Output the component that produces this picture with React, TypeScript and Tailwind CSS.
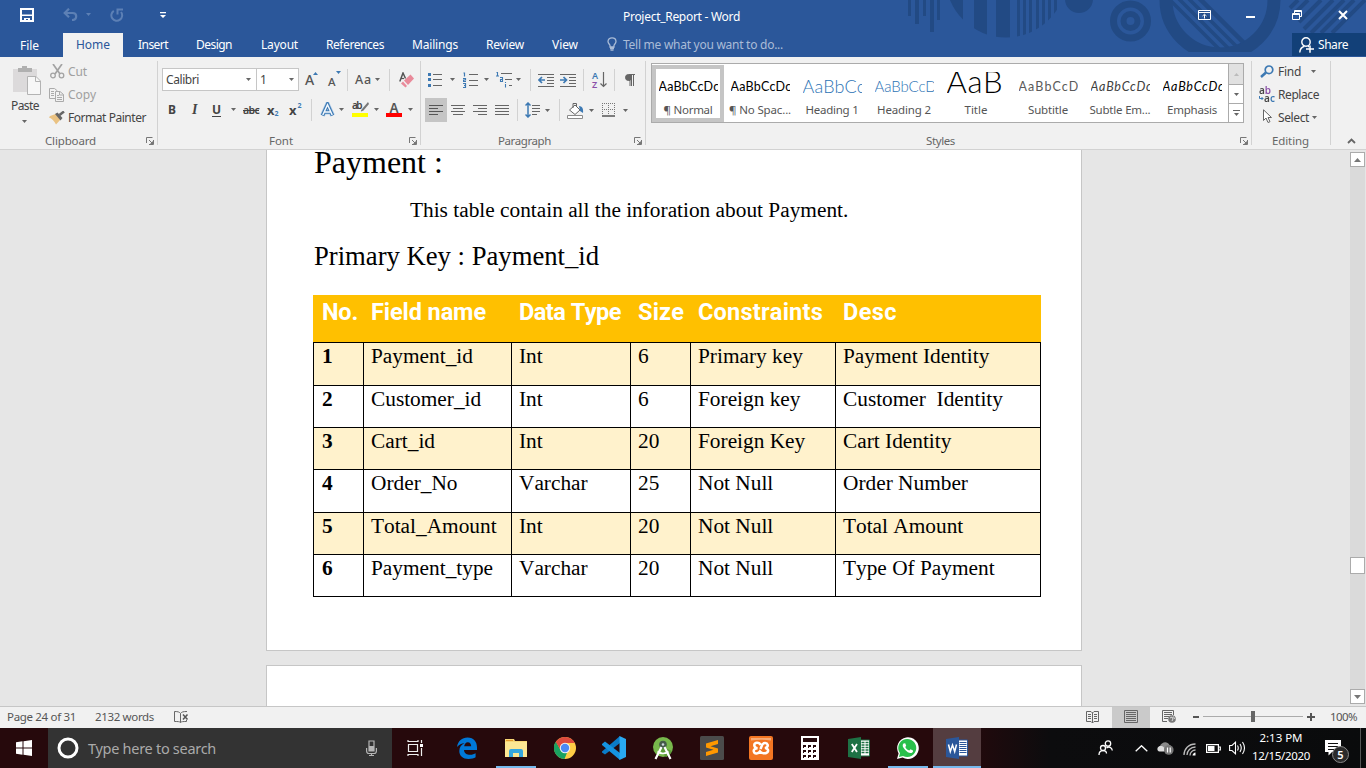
import { useLayoutEffect, useRef, useState } from "react";
import type { ReactNode } from "react";

/* A run of text whose tracking is tuned so that it fills a given width. */
function T({ w, c = "", children }: { w: number; c?: string; children: string }) {
  const ref = useRef<HTMLSpanElement>(null);
  const [ls, setLs] = useState(0);
  useLayoutEffect(() => {
    const el = ref.current;
    if (!el) return;
    el.style.letterSpacing = "0px";
    const natural = el.getBoundingClientRect().width;
    const next = (w - natural) / children.length;
    el.style.letterSpacing = next + "px";
    setLs(next);
  }, [w, children]);
  return (
    <span className={"flex shrink-0 whitespace-pre " + c} style={{ width: w }}>
      <span ref={ref} className="inline-block shrink-0" style={{ letterSpacing: ls }}>
        {children}
      </span>
    </span>
  );
}

function Ic({ w, h, c = "", children }: { w: number; h: number; c?: string; children: ReactNode }) {
  return (
    <svg width={w} height={h} viewBox={`0 0 ${w} ${h}`} className={"block shrink-0 " + c} fill="none">
      {children}
    </svg>
  );
}

const Chev = ({ c = "" }: { c?: string }) => (
  <Ic w={5} h={3} c={c}>
    <path d="M0 0H5L2.5 3Z" fill="#666" />
  </Ic>
);

const Sep = ({ c = "" }: { c?: string }) => <div className={"h-[22px] w-px shrink-0 bg-[#d2d2d2] " + c} />;

const Launcher = ({ c = "" }: { c?: string }) => (
  <Ic w={8} h={8} c={c}>
    <path d="M0.5 6V0.5H6.5M3 3L6 6M7.5 3V7.5H3" stroke="#777" />
    <path d="M7 4V7H4Z" fill="#777" />
  </Ic>
);

/* ---------- header ---------- */

function Pattern() {
  return (
    <svg width="466" height="57" viewBox="900 0 466 57" className="absolute top-0 right-0" fill="none">
      <defs>
        <clipPath id="disc"><circle cx="1006" cy="-23" r="60.5" /></clipPath>
        <clipPath id="inner"><circle cx="1220" cy="0" r="48" /></clipPath>
        <clipPath id="flat"><rect x="1150" y="0" width="140" height="52" /></clipPath>
      </defs>
      <g fill="#224a84">
        <path d="M908 0h3v16h-3zM915 0h4v24h-4zM923 0h3v16h-3zM930 0h4v32h-4zM937 0h3v20h-3z" />
        <g clipPath="url(#disc)">
          <path d="M950 0h13v40h-13zM974 0h13v40h-13zM996 0h14v40h-14zM1017 0h3v40h-3zM1023 0h3v40h-3zM1029 0h3v40h-3zM1036 0h3v40h-3zM1042 0h3v40h-3zM1048 0h3v40h-3zM1054 0h3v40h-3z" />
        </g>
        <circle cx="1079" cy="-1" r="14" />
      </g>
      <circle cx="1130.500" cy="21" r="17" stroke="#224a84" strokeWidth="7" />
      <circle cx="1130.500" cy="21" r="7" stroke="#224a84" strokeWidth="6" />
      <g clipPath="url(#flat)">
        <circle cx="1220" cy="0" r="54" stroke="#224a84" strokeWidth="13" />
      </g>
      <g clipPath="url(#inner)" stroke="#224a84">
        <path d="M1166 -4L1226 56M1176 -4L1236 56" strokeWidth="3.500" />
        <path d="M1186 -4L1246 56" strokeWidth="3.500" />
        <path d="M1197 -4L1257 56" strokeWidth="4.500" />
      </g>
      <g stroke="#224a84" strokeWidth="4">
        <path d="M1290 8L1298 0M1293 15L1308 0M1299 22L1321 0M1304 29L1333 0M1311 33L1344 0M1321 33L1354 0M1332 33L1365 0" />
      </g>
    </svg>
  );
}

function TitleBar() {
  return (
    <div className="relative flex h-[33px] items-center">
      <Ic w={14} h={14} c="ml-[20px] -mt-[3px]">
        <path d="M1 1H13V13H1Z" stroke="#fff" strokeWidth="2" />
        <path d="M2 6.500H12V8H2Z" fill="#fff" />
        <path d="M4 10H10V13H8V11H6V13H4Z" fill="#fff" />
      </Ic>
      <Ic w={15} h={13} c="ml-[29px] -mt-[4px]">
        <path d="M6 0.700L1.700 5L6 9.300M2 5H9.500C12 5 13.200 6.500 13.200 8.300C13.200 10.500 11.500 12 9 12" stroke="#5d80b5" strokeWidth="2.200" />
      </Ic>
      <Ic w={5} h={3} c="ml-[8px] -mt-[4px]"><path d="M0 0H5L2.500 3Z" fill="#5d80b5" /></Ic>
      <Ic w={14} h={14} c="ml-[19px] -mt-[4px]">
        <path d="M3.800 2.800A5.400 5.400 0 1 0 11 4M7.500 6.500V1.500H13" stroke="#5d80b5" strokeWidth="2" />
      </Ic>
      <Ic w={6} h={7} c="ml-[36px] -mt-[3px]">
        <path d="M0 0H6V1.200H0ZM0 3H6L3 6Z" fill="#fff" />
      </Ic>
      <T w={117} c="ml-[457px] text-[12px] text-white">Project_Report - Word</T>
      <Ic w={13} h={10} c="ml-[458px] -mt-[3px]">
        <path d="M0.500 0.500H12.500V9.500H0.500ZM0.500 2.500H12.500M6.500 8.500V4.500M4.500 6L6.500 4.200L8.500 6" stroke="#fff" />
      </Ic>
      <Ic w={9} h={2} c="ml-[35px]"><path d="M0 0H9V2H0Z" fill="#fff" /></Ic>
      <Ic w={10} h={10} c="ml-[37px] -mt-[3px]">
        <path d="M0.500 3.500H7.500V9.500H0.500ZM0 4.500H8M2.500 3V0.500H9.500V6.500H8M2.500 1.500H9.500" stroke="#fff" />
      </Ic>
      <Ic w={10} h={10} c="ml-[36px] -mt-[3px]"><path d="M1 1L9 9M9 1L1 9" stroke="#fff" strokeWidth="2" /></Ic>
    </div>
  );
}

function Tabs() {
  return (
    <div className="relative flex h-[24px] items-center text-[12px] text-white">
      <T w={19} c="ml-[20px] mt-[2px]">File</T>
      <div className="ml-[24px] flex h-full w-[60px] items-center bg-[#f1f1f1] pl-[13px] text-[#2b579a]"><T w={34}>Home</T></div>
      <T w={30} c="ml-[15px]">Insert</T>
      <T w={36} c="ml-[28px]">Design</T>
      <T w={37} c="ml-[29px]">Layout</T>
      <T w={58} c="ml-[28px]">References</T>
      <T w={46} c="ml-[28px]">Mailings</T>
      <T w={38} c="ml-[28px]">Review</T>
      <T w={26} c="ml-[28px]">View</T>
      <Ic w={10} h={14} c="ml-[29px] -mt-[2px]">
        <path d="M3 10V8.500C3 7.500 1 6.700 1 4.500C1 2.300 2.800 0.800 5 0.800S9 2.300 9 4.500C9 6.700 7 7.500 7 8.500V10ZM3 11.500H7M3.500 13.200H6.500" stroke="#aabcd7" strokeWidth="1.300" />
      </Ic>
      <T w={160} c="ml-[6px] text-[#aabcd7]">Tell me what you want to do...</T>
      <div className="ml-auto flex h-[23px] w-[74px] items-center self-start bg-[#124078] pl-[7px]">
        <Ic w={15} h={16}>
          <circle cx="7" cy="5" r="4.200" stroke="#fff" strokeWidth="1.400" />
          <path d="M0.800 15.500C1 12 3 9.800 5.500 9.200M9 9C10 10 10 10 10 10" stroke="#fff" strokeWidth="1.400" />
          <path d="M7 12H15M11 8.500V15.800" stroke="#fff" strokeWidth="1.500" />
        </Ic>
        <T w={30} c="ml-[4px]">Share</T>
      </div>
    </div>
  );
}

/* ---------- ribbon ---------- */

function Clipboard() {
  return (
    <div className="flex h-full w-[157px] flex-col text-[12px] text-[#444]">
      <div className="flex h-[76px]">
        <div className="flex w-[48px] flex-col pt-[8px]">
          <Ic w={29} h={31} c="ml-[13px]">
            <path d="M0 4H24V27H0Z" fill="#dcdadb" />
            <path d="M5 3H9V1H14V3H19V7H5Z" fill="#b0b0b0" />
            <path d="M14.500 11.500H23L27.500 16V29.500H14.500Z" fill="#f7f7f7" stroke="#b3b3b3" />
            <path d="M22.500 11.500V16.500H27.500" stroke="#b3b3b3" />
          </Ic>
          <T w={28} c="ml-[11px] mt-[2px]">Paste</T>
          <Chev c="ml-[22px] mt-[6px]" />
        </div>
        <div className="flex flex-col pt-[3px]">
          <div className="flex h-[23px] items-center text-[#a0a0a0]">
            <Ic w={15} h={15} c="ml-[2px]">
              <path d="M3 0L10 10M12 0L5 10" stroke="#a3a3a3" strokeWidth="1.700" />
              <circle cx="3" cy="11.500" r="2.300" stroke="#a3a3a3" strokeWidth="1.300" />
              <circle cx="11.500" cy="11.500" r="2.300" stroke="#a3a3a3" strokeWidth="1.300" />
            </Ic>
            <T w={19} c="ml-[3px]">Cut</T>
          </div>
          <div className="flex h-[23px] items-center text-[#a0a0a0]">
            <Ic w={15} h={14} c="ml-[1px]">
              <path d="M6 10.500H0.500V0.500H5.500L8.500 3" stroke="#aaa" />
              <path d="M6.500 3.500H11L14.500 6.500V13.500H6.500ZM10.500 3.500V7H14.500M8 7.500H10M8 9.500H13M8 11.500H13M2 3.500H5M2 5.500H5M2 7.500H5" stroke="#aaa" />
            </Ic>
            <T w={28} c="ml-[4px]">Copy</T>
          </div>
          <div className="flex h-[23px] items-center">
            <Ic w={16} h={14} c="ml-[1px]">
              <path d="M1 5L8 2.500L12 8L7 13.500C5 10 3 7.500 0 6.500Z" fill="#eac282" />
              <path d="M6 3L8.500 1.500L13.500 7L11.500 9.500Z" fill="#666" />
              <path d="M10.500 4L15 0.500" stroke="#666" strokeWidth="2.500" />
            </Ic>
            <T w={78} c="ml-[3px]">Format Painter</T>
          </div>
        </div>
      </div>
      <div className="flex h-[15px] items-center text-[11.500px] text-[#666]">
        <T w={51} c="ml-[45px]">Clipboard</T>
        <Launcher c="ml-[50px]" />
      </div>
    </div>
  );
}

function FontGroup() {
  return (
    <div className="flex h-full w-[262px] flex-col text-[#444]">
      <div className="mt-[11px] flex h-[23px] items-center">
        <div className="ml-[4px] flex h-full w-[95px] items-center border border-[#c6c6c6] bg-white pl-[3px] text-[12px]">
          <T w={33}>Calibri</T>
          <Chev c="ml-[47px]" />
        </div>
        <div className="-ml-px flex h-full w-[43px] items-center border border-[#c6c6c6] bg-white pl-[3px] text-[12px]">
          <T w={6}>1</T>
          <Chev c="ml-[23px]" />
        </div>
        <div className="ml-[6px] flex w-[15px] shrink-0">
          <span className="text-[14px] leading-[16px] font-medium text-[#555]">A</span>
          <Ic w={5} h={3} c="-ml-[1px]"><path d="M0 3H5L2.500 0Z" fill="#3d79b3" /></Ic>
        </div>
        <div className="ml-[8px] flex w-[15px] shrink-0">
          <span className="mt-[3px] text-[11.500px] leading-[15px] font-medium text-[#555]">A</span>
          <Ic w={5} h={3} c=""><path d="M0 0H5L2.500 3Z" fill="#3d79b3" /></Ic>
        </div>
        <Sep c="ml-[4px]" />
        <T w={17} c="ml-[7px] text-[12.500px] font-medium text-[#555]">Aa</T>
        <Chev c="ml-[3px]" />
        <Sep c="ml-[9px]" />
        <Ic w={15} h={16} c="ml-[9px]">
          <path d="M0.800 9.500L4 1L6.500 6.500" stroke="#555" strokeWidth="1.500" />
          <path d="M2 6.500H5" stroke="#555" strokeWidth="1.200" />
          <path d="M5 8.500L11.500 2.500L15 6.500L9 13Z" fill="#e98a9a" />
          <path d="M4 9.500L8 14L6.500 15.500L2 11.500Z" fill="#e98a9a" />
        </Ic>
      </div>
      <div className="mt-[7px] flex h-[23px] items-center text-[#444]">
        <span className="ml-[10px] w-[8px] text-[12px] font-bold">B</span>
        <span className="ml-[16px] w-[8px] font-['Liberation_Serif'] text-[14px] font-bold italic">I</span>
        <span className="ml-[12px] w-[9px] text-[12px] leading-[13px] font-bold"><span className="block border-b border-[#444]">U</span></span>
        <Chev c="ml-[10px]" />
        <T w={16} c="ml-[7px] text-[10.500px] font-semibold line-through">abc</T>
        <div className="ml-[8px] flex w-[13px] shrink-0 items-end font-bold"><span className="text-[13px] leading-[16px]">x</span><span className="text-[7px] leading-[8px] text-[#3d79b3]">2</span></div>
        <div className="ml-[9px] flex w-[14px] shrink-0 font-bold"><span className="text-[13px] leading-[16px]">x</span><span className="ml-px text-[7px] leading-[7px] text-[#3d79b3]">2</span></div>
        <Sep c="ml-[8px]" />
        <Ic w={15} h={16} c="ml-[8px]">
          <path d="M2.500 13.500L7.500 2.500L12.500 13.500M4.500 10H10.500" stroke="#b4cfe9" strokeWidth="5" />
          <path d="M2.500 13.500L7.500 2.500L12.500 13.500M4.500 10H10.500" stroke="#3d79b3" strokeWidth="3.600" />
          <path d="M2.800 13L7.500 2.800L12.200 13M4.500 10H10.500" stroke="#f5f9fd" strokeWidth="1.500" />
        </Ic>
        <Chev c="ml-[4px]" />
        <div className="ml-[8px] flex h-[17px] w-[17px] shrink-0 flex-col">
          <div className="flex h-[12px]">
            <T w={9} c="text-[10px] leading-[8px] font-semibold">ab</T>
            <Ic w={8} h={12}><path d="M7 1L1 8L-1 11L2.500 9.500L8 3Z" fill="#777" /></Ic>
          </div>
          <div className="h-[4px] w-[16px] bg-[#ffff00]" />
        </div>
        <Chev c="ml-[5px]" />
        <div className="ml-[7px] flex h-[17px] w-[16px] shrink-0 flex-col items-center">
          <span className="h-[12px] text-[13.500px] leading-[14px] font-semibold text-[#555]">A</span>
          <div className="h-[4px] w-full shrink-0 bg-[#ff0000]" />
        </div>
        <Chev c="ml-[6px]" />
      </div>
      <div className="mt-[12px] flex h-[15px] items-center text-[11.500px] text-[#666]">
        <T w={24} c="ml-[111px]">Font</T>
        <Launcher c="ml-[116px]" />
      </div>
    </div>
  );
}

const L = "#666";
function Paragraph() {
  return (
    <div className="flex h-full w-[224px] flex-col text-[#444]">
      <div className="mt-[11px] flex h-[23px] items-center">
        <Ic w={14} h={15} c="ml-[7px]">
          <path d="M5 2.500H14M5 7.500H14M5 13.500H14" stroke={L} />
          <path d="M0 1H3V4H0ZM0 6H3V9H0ZM0 12H3V15H0Z" fill="#3d79b3" />
        </Ic>
        <Chev c="ml-[8px]" />
        <Ic w={15} h={16} c="ml-[8px]">
          <path d="M6 2.500H15M6 8.500H15M6 13.500H15" stroke={L} />
          <path d="M0.500 1H1.500V4.500M0 6.500H2.500V8H0.500V9.500H3M0 11.500H2.500V15.500H0M1 13.500H2" stroke="#3d79b3" strokeWidth="1.200" />
        </Ic>
        <Chev c="ml-[6px]" />
        <Ic w={16} h={16} c="ml-[7px]">
          <path d="M5 1.500H16M9 7.500H16M13 13.500H16" stroke={L} />
          <path d="M0.500 0.500H1.500V4M0 4H3M4 5.500H6.500V9.500H4.500V7.500H6.500M9.500 12V15.500M9.500 10V11" stroke="#3d79b3" strokeWidth="1.100" />
        </Ic>
        <Chev c="ml-[4px]" />
        <Sep c="ml-[9px]" />
        <Ic w={16} h={14} c="ml-[7px]">
          <path d="M0 1.500H16M9 4.500H16M9 7.500H16M9 10.500H16M0 13.500H16" stroke={L} />
          <path d="M7 7H1M4 4L1 7L4 10" stroke="#3d79b3" strokeWidth="1.700" />
        </Ic>
        <Ic w={16} h={14} c="ml-[6px]">
          <path d="M0 1.500H16M9 4.500H16M9 7.500H16M9 10.500H16M0 13.500H16" stroke={L} />
          <path d="M0 7H6M3.500 4L6.500 7L3.500 10" stroke="#3d79b3" strokeWidth="1.700" />
        </Ic>
        <Sep c="ml-[7px]" />
        <div className="ml-[8px] flex h-[18px] w-[15px] shrink-0">
          <span className="flex w-[7px] flex-col text-[9px] leading-[9px] font-semibold"><span className="text-[#3d79b3]">A</span><span className="text-[#8a4fa8]">Z</span></span>
          <Ic w={7} h={16} c="ml-[1px] mt-px"><path d="M3.500 0V14M0.500 11.500L3.500 14.500L6.500 11.500" stroke={L} strokeWidth="1.200" /></Ic>
        </div>
        <Sep c="ml-[7px]" />
        <Ic w={10} h={12} c="ml-[10px]">
          <path d="M10 0.500H3.500A3 3 0 0 0 3.500 6.500H5V12M8.500 0.500V12M6.500 0.500V12" stroke={L} strokeWidth="1" />
          <path d="M6 0.500H3.500A3 3 0 0 0 3.500 6.500H6Z" fill={L} />
        </Ic>
      </div>
      <div className="mt-[7px] flex h-[24px] items-center">
        <div className="ml-[4px] flex h-full w-[22px] items-center bg-[#c5c5c5] pl-[4px]">
          <Ic w={14} h={11}><path d="M0 0.500H14M0 3.500H9M0 6.500H14M0 9.500H9" stroke="#555" /></Ic>
        </div>
        <Ic w={14} h={11} c="ml-[4px]"><path d="M0 0.500H14M2 3.500H12M0 6.500H14M2 9.500H12" stroke={L} /></Ic>
        <Ic w={14} h={11} c="ml-[8px]"><path d="M0 0.500H14M5 3.500H14M0 6.500H14M5 9.500H14" stroke={L} /></Ic>
        <Ic w={14} h={11} c="ml-[8px]"><path d="M0 0.500H14M0 3.500H14M0 6.500H14M0 9.500H14" stroke={L} /></Ic>
        <Sep c="ml-[8px]" />
        <Ic w={15} h={16} c="ml-[7px]">
          <path d="M7 3.500H15M7 6.500H15M7 9.500H15M7 12.500H12" stroke={L} />
          <path d="M3 1V15M0.500 3.500L3 1L5.500 3.500M0.500 12.500L3 15L5.500 12.500" stroke="#3d79b3" strokeWidth="1.500" />
        </Ic>
        <Chev c="ml-[5px]" />
        <Sep c="ml-[9px]" />
        <Ic w={17} h={17} c="ml-[7px]">
          <path d="M2.500 8L8 3L13 8L8 12.500Z" fill="#fff" stroke={L} />
          <path d="M6 6V1.500H9.500V5" stroke={L} />
          <path d="M12 4C15 4.500 16.500 6 16 11L13 9Z" fill="#3d79b3" />
          <path d="M0.500 13.500H15.500V16.500H0.500Z" fill="#fff" stroke="#8a8a8a" />
        </Ic>
        <Chev c="ml-[5px]" />
        <Ic w={14} h={14} c="ml-[8px]">
          <path d="M0 0.500H13M0 6.500H13M0.500 0V12M6.500 0V12M12.500 0V12" stroke="#777" strokeDasharray="1 1" />
          <path d="M0 13H13" stroke="#555" strokeWidth="1.500" />
        </Ic>
        <Chev c="ml-[7px]" />
      </div>
      <div className="mt-[11px] flex h-[15px] items-center text-[11.500px] text-[#666]">
        <T w={53} c="ml-[77px]">Paragraph</T>
        <Launcher c="ml-[83px]" />
      </div>
    </div>
  );
}

type StyleItem = { s: string; w: number; c: string; n: string; nw: number };
const styles: StyleItem[] = [
  { s: "AaBbCcDc", w: 61, c: "text-[12.500px] leading-[30px] text-black", n: "¶ Normal", nw: 49 },
  { s: "AaBbCcDc", w: 61, c: "text-[12.500px] leading-[30px] text-black", n: "¶ No Spac...", nw: 62 },
  { s: "AaBbCc", w: 63, c: "text-[18px] leading-[29px] text-[#2e74b5] font-light", n: "Heading 1", nw: 53 },
  { s: "AaBbCcD", w: 62, c: "text-[15px] leading-[28px] text-[#2e74b5] font-light", n: "Heading 2", nw: 54 },
  { s: "AaB", w: 57, c: "text-[31px] leading-[18px] text-black font-light", n: "Title", nw: 23 },
  { s: "AaBbCcD", w: 61, c: "text-[12.500px] leading-[30px] text-[#5a5a5a]", n: "Subtitle", nw: 40 },
  { s: "AaBbCcDc", w: 62, c: "text-[12.500px] leading-[30px] text-[#404040] italic", n: "Subtle Em...", nw: 61 },
  { s: "AaBbCcDc", w: 62, c: "text-[12.500px] leading-[30px] text-black italic", n: "Emphasis", nw: 50 },
];

function StylesGroup() {
  return (
    <div className="flex h-full w-[605px] flex-col">
      <div className="mt-[6px] ml-[5px] flex h-[60px] w-[593px] border border-[#ababab] bg-white">
        {styles.map((x, i) => (
          <div key={x.n + i} className={"flex h-[57px] w-[72px] shrink-0 flex-col items-center " + (i === 0 ? "mt-px border-4 border-[#c5c5c5]" : "mt-px border-4 border-transparent")}>
            <div className="mt-[3px] flex h-[26px] w-[59px] shrink-0 items-start overflow-hidden">
              <T w={x.w} c={"font-['Lato'] " + x.c}>{x.s}</T>
            </div>
            <div className="mt-[4px] text-[11.500px] leading-[16px] text-[#555]"><T w={x.nw}>{x.n}</T></div>
          </div>
        ))}
        <div className="ml-auto flex w-[15px] flex-col border-l border-[#ababab]">
          <div className="flex h-[20px] items-center justify-center bg-[#e1e1e1]"><Ic w={5} h={3}><path d="M0 3H5L2.500 0Z" fill="#bbb" /></Ic></div>
          <div className="flex h-[19px] items-center justify-center border-t border-[#ababab]"><Chev /></div>
          <div className="flex h-[19px] items-center justify-center border-t border-[#ababab]">
            <Ic w={7} h={6}><path d="M0 0.500H7" stroke="#666" /><path d="M1 3H6L3.500 6Z" fill="#666" /></Ic>
          </div>
        </div>
      </div>
      <div className="mt-[10px] flex h-[15px] items-center text-[11.500px] text-[#666]">
        <T w={29} c="ml-[280px]">Styles</T>
        <Launcher c="ml-[285px]" />
      </div>
    </div>
  );
}

function Editing() {
  return (
    <div className="flex h-full w-[78px] flex-col text-[12px] text-[#444]">
      <div className="flex h-[76px] flex-col pt-[3px]">
        <div className="flex h-[23px] items-center">
          <Ic w={14} h={13} c="ml-[8px]">
            <circle cx="9" cy="4.800" r="3.800" stroke="#3d79b3" strokeWidth="1.700" />
            <path d="M6 7.500L1 12" stroke="#3d79b3" strokeWidth="2.500" />
          </Ic>
          <T w={23} c="ml-[4px]">Find</T>
          <Chev c="ml-[10px]" />
        </div>
        <div className="flex h-[23px] items-center">
          <div className="ml-[7px] flex h-[17px] w-[16px] shrink-0 flex-col text-[10px] leading-[8px] font-semibold">
            <T w={12} c="bg-[linear-gradient(90deg,#444_50%,#8a4fa8_50%)] bg-clip-text text-transparent">ab</T>
            <span className="flex items-center">
              <Ic w={5} h={5}><path d="M0.500 0V2.500H4M2.500 1L4 2.500L2.500 4" stroke="#3d79b3" /></Ic>
              <T w={11} c="bg-[linear-gradient(90deg,#444_54%,#3d79b3_54%)] bg-clip-text text-transparent">ac</T>
            </span>
          </div>
          <T w={41} c="ml-[3px]">Replace</T>
        </div>
        <div className="flex h-[23px] items-center">
          <Ic w={9} h={15} c="ml-[11px] mr-[2px] -mt-[2px]"><path d="M0.500 0.800V11.500L3 9L5 13.500L7 12.700L5 8.500H8.500Z" fill="#fff" stroke="#666" /></Ic>
          <T w={31} c="ml-[4px]">Select</T>
          <Chev c="ml-[3px]" />
        </div>
      </div>
      <div className="flex h-[15px] items-center text-[11.500px] text-[#666]"><T w={37} c="ml-[20px]">Editing</T></div>
    </div>
  );
}

const GroupSep = () => <div className="mt-[4px] h-[84px] w-px shrink-0 bg-[#d2d2d2]" />;

/* ---------- document ---------- */

const heads = [
  { t: "No.", w: 36 }, { t: "Field name", w: 115 }, { t: "Data Type", w: 102 },
  { t: "Size", w: 46 }, { t: "Constraints", w: 125 }, { t: "Desc", w: 54 },
];
const rows = [
  ["1", "Payment_id", "Int", "6", "Primary key", "Payment Identity"],
  ["2", "Customer_id", "Int", "6", "Foreign key", "Customer  Identity"],
  ["3", "Cart_id", "Int", "20", "Foreign Key", "Cart Identity"],
  ["4", "Order_No", "Varchar", "25", "Not Null", "Order Number"],
  ["5", "Total_Amount", "Int", "20", "Not Null", "Total Amount"],
  ["6", "Payment_type", "Varchar", "20", "Not Null", "Type Of Payment"],
];
const heights = ["h-[43px]", "h-[42px]", "h-[42px]", "h-[43px]", "h-[42px]", "h-[43px]"];
const cols = "grid grid-cols-[50px_148px_119px_60px_145px_206px]";

function Doc() {
  return (
    <div className="flex h-[556px] overflow-hidden bg-[#e6e6e6]">
      <div className="ml-[266px] flex h-[556px] w-[816px] flex-col overflow-hidden">
        <div className="flex h-[501px] shrink-0 flex-col border border-t-0 border-[#c6c6c6] bg-white pl-[46px] font-['Liberation_Serif'] text-black [font-kerning:none]">
          <div className="-mt-[6px] ml-px text-[32px] leading-[36px]">Payment :</div>
          <div className="mt-[18px] ml-[97px] text-[21.330px] leading-[24px]">This table contain all the inforation about Payment.</div>
          <div className="mt-[19px] ml-px text-[26.670px] leading-[30px]">Primary Key : Payment_id</div>
          <div className="mt-[24px] w-[728px]">
            <div className={"h-[47px] bg-[#ffc000] font-['Roboto'] text-[23.500px] leading-[28px] font-bold text-white " + cols}>
              {heads.map((h, i) => (
                <div key={h.t} className={"pt-[3px] " + (i === 0 ? "pl-[9px]" : "pl-[8px]")}><T w={h.w}>{h.t}</T></div>
              ))}
            </div>
            {rows.map((r, i) => (
              <div key={r[0]} className={"text-[21.330px] leading-[24px] whitespace-pre border-t border-black " + cols + " " + heights[i] + (i % 2 === 0 ? " bg-[#fff2cc]" : " bg-white") + (i === 5 ? " border-b" : "")}>
                {r.map((v, j) => (
                  <div key={j} className={"border-l border-black pt-px " + (j === 0 ? "pl-[8px] font-bold" : "pl-[7px]") + (j === 5 ? " border-r" : "")}>{v}</div>
                ))}
              </div>
            ))}
          </div>
        </div>
        <div className="mt-[14px] h-[60px] shrink-0 border border-[#c6c6c6] bg-white" />
      </div>
      <div className="ml-auto flex w-[16px] flex-col pt-[2px]">
        <div className="flex h-[15px] w-[15px] shrink-0 items-center justify-center border border-[#ababab] bg-white"><Ic w={7} h={4}><path d="M0 4H7L3.500 0Z" fill="#777" /></Ic></div>
        <div className="h-[390px] w-[15px] bg-[#dadada]" />
        <div className="h-[17px] w-[15px] border border-[#ababab] bg-white" />
        <div className="h-[115px] w-[15px] bg-[#dadada]" />
        <div className="flex h-[15px] w-[15px] shrink-0 items-center justify-center border border-[#ababab] bg-white"><Ic w={7} h={4}><path d="M0 0H7L3.500 4Z" fill="#777" /></Ic></div>
      </div>
    </div>
  );
}

/* ---------- status bar ---------- */

function Status() {
  return (
    <div className="flex h-[22px] items-center border-t border-[#c6c6c6] bg-[#f1f1f1] pb-[2px] text-[11.500px] text-[#555]">
      <T w={69} c="ml-[7px]">Page 24 of 31</T>
      <T w={59} c="ml-[19px]">2132 words</T>
      <Ic w={15} h={12} c="ml-[20px]">
        <path d="M6.500 11.500V2.500C5.500 1 4 0.500 0.500 0.500V10.500C4 10.500 5.500 10.500 6.500 11.500C7.500 10.500 9 10.500 12.500 10.500V9M6.500 2.500C7.500 1 9 0.500 13 0.500" stroke="#666" />
        <path d="M9 3.500L13.500 8.500M13.500 3.500L9 8.500" stroke="#555" strokeWidth="1.500" />
      </Ic>
      <Ic w={13} h={12} c="ml-auto">
        <path d="M6.500 12V1.500M0.500 0.500H5L6.500 2L8 0.500H12.500V10.500H8L6.500 12L5 10.500H0.500ZM2 3.500H5M2 5.500H5M2 7.500H5M8 3.500H11M8 5.500H11M8 7.500H11" stroke="#666" />
      </Ic>
      <div className="-mb-[2px] ml-[13px] flex h-[21px] w-[38px] items-center justify-center bg-[#cacaca] pb-[2px]">
        <Ic w={14} h={13}><path d="M0.500 0.500H13.500V12.500H0.500ZM2 2.500H12M2 4.500H12M2 6.500H12M2 8.500H12M2 10.500H12" stroke="#666" /></Ic>
      </div>
      <Ic w={14} h={13} c="ml-[12px]">
        <path d="M5 11.500H0.500V0.500H11.500V5M2 2.500H10M2 4.500H10M2 6.500H7M2 8.500H6" stroke="#666" />
        <circle cx="10" cy="9" r="3.800" fill="#777" />
        <path d="M8 8L10 7L11 9L10 11M11.500 6.500L12.500 9" stroke="#ddd" />
      </Ic>
      <div className="ml-[17px] h-[2px] w-[6px] bg-[#555]" />
      <div className="ml-[4px] flex h-full w-[100px] items-center">
        <div className="h-px w-[48px] bg-[#ababab]" />
        <div className="h-[11px] w-[4px] bg-[#666]" />
        <div className="h-px w-[48px] bg-[#ababab]" />
      </div>
      <Ic w={8} h={8} c="ml-[4px]"><path d="M0 4H8M4 0V8" stroke="#555" strokeWidth="2" /></Ic>
      <T w={27} c="mr-[9px] ml-[15px]">100%</T>
    </div>
  );
}

/* ---------- taskbar ---------- */

function Cell({ children, line, active }: { children: ReactNode; line?: boolean; active?: boolean }) {
  return (
    <div className={"flex h-full shrink-0 flex-col items-center " + (active ? "ml-px w-[48px] bg-[#543d40]" : "w-[49px]")}>
      <div className="flex h-[38px] items-center pt-[2px]">{children}</div>
      {line && <div className={"h-[2px] bg-[#76b9ed] " + (active ? "w-[48px]" : "w-[40px]")} />}
    </div>
  );
}

function Taskbar() {
  return (
    <div className="flex h-[40px] items-center bg-[linear-gradient(90deg,#26090c_0px,#26090c_960px,#0c0c0e_1050px,#0a0b0c_1366px)] text-white">
      <Ic w={16} h={16} c="ml-[16px]">
        <path d="M0 2.300L6.500 1.300V7.500H0ZM7.500 1.200L16 0V7.500H7.500ZM0 8.500H6.500V14.700L0 13.700ZM7.500 8.500H16V16L7.500 14.800Z" fill="#fff" />
      </Ic>
      <div className="ml-[16px] flex h-full w-[344px] items-center bg-[#333]">
        <Ic w={22} h={22} c="ml-[9px]"><circle cx="11" cy="11" r="9" stroke="#fff" strokeWidth="3" /></Ic>
        <T w={128} c="ml-[9px] text-[14.500px] text-[#aaa]">Type here to search</T>
        <Ic w={11} h={17} c="ml-[150px]">
          <path d="M3 1H8V11H3Z" stroke="#b5b5b5" strokeWidth="1.200" />
          <path d="M3 6H8V11H3Z" fill="#b5b5b5" />
          <path d="M0.600 8V11C0.600 12.500 1.500 13.500 3 13.500H8C9.500 13.500 10.400 12.500 10.400 11V8M5.500 13.500V15.500M3 15.500H8" stroke="#b5b5b5" strokeWidth="1.200" />
        </Ic>
      </div>
      <Ic w={17} h={16} c="ml-[15px]">
        <path d="M1.500 4.500H10.500V11.500H1.500ZM1 0V1.500H11V0M1 16V14.500H11V16M14.500 0V3M14.500 8V16" stroke="#eee" strokeWidth="1.200" />
        <path d="M13 4H16V7H13Z" fill="#fff" />
      </Ic>
      <div className="ml-[18px] flex h-full">
        <Cell>
          <Ic w={22} h={22}>
            <path d="M1 10C2 4 6 0.500 11.500 0.500C18 0.500 21 5 21 10.500V13H8C8.200 16.500 11 17.800 14 17.800C16.500 17.800 18.300 17 19.600 16.200V20.300C18 21.300 15.500 22 12.500 22C7 22 3.300 18.800 3.300 14C3.300 10.500 5.200 7.800 8.500 6.300C5.500 6.500 3 7.800 1 10ZM8.200 9.300H15.200C15.200 7 14 5.300 11.800 5.300C9.800 5.300 8.500 7 8.200 9.300Z" fill="#0078d7" fillRule="evenodd" />
          </Ic>
        </Cell>
        <Cell line>
          <Ic w={22} h={18}>
            <path d="M0 0H9L10 2H22V18H0Z" fill="#f8d775" />
            <path d="M0 3H22V18H0Z" fill="#fde794" />
            <path d="M1 1H8V2H1Z" fill="#e59b2c" />
            <path d="M4 18V12Q4 10 6 10H16Q18 10 18 12V18H14V14H8V18Z" fill="#35a7df" />
          </Ic>
        </Cell>
        <Cell>
          <Ic w={22} h={22}>
            <circle cx="11" cy="11" r="11" fill="#ffcd46" />
            <path d="M2 4.500L6.300 12.500L13 15.800L10.500 22A11 11 0 0 1 2 4.500Z" fill="#1aa260" />
            <path d="M1.800 5A11 11 0 0 1 20.800 6H11L6.300 12.500Z" fill="#dd4b3e" />
            <circle cx="11" cy="11" r="5.200" fill="#f1f1f1" />
            <circle cx="11" cy="11" r="4.200" fill="#4a8af4" />
          </Ic>
        </Cell>
        <Cell>
          <Ic w={24} h={24}>
            <path d="M18 0V7L3 18.500L0 16.500V15.500Z" fill="#0a7bc8" />
            <path d="M0 8L3 5.500L18 17V24L0 9Z" fill="#1593e0" />
            <path d="M17.500 0L24 3V21L17.500 24Z" fill="#29a9f2" />
          </Ic>
        </Cell>
        <Cell>
          <Ic w={22} h={23}>
            <circle cx="11" cy="10" r="10" fill="#78b84c" />
            <path d="M11 10L20 14A10 10 0 0 1 14 20L7 12Z" fill="#5c9a38" />
            <circle cx="11" cy="7.500" r="3.800" fill="#455a4a" />
            <circle cx="11" cy="7.500" r="1.300" fill="#cfd8dc" />
            <path d="M9.500 10L3.500 22M12.500 10L18.500 22" stroke="#fff" strokeWidth="2.200" />
            <path d="M5.500 14.500Q11 18.500 16.500 14.500" stroke="#fff" strokeWidth="1.700" />
          </Ic>
        </Cell>
        <Cell>
          <Ic w={24} h={24}>
            <rect width="24" height="24" rx="1.500" fill="#4b4b4b" />
            <path d="M6 7.500L18 4V8L10.500 10.300L18 12.500V16.500L6 20V16L13.500 13.700L6 11.500Z" fill="#ff9800" />
          </Ic>
        </Cell>
        <Cell>
          <Ic w={24} h={24}>
            <rect width="24" height="24" rx="2" fill="#f37623" />
            <path d="M2 2H22V4.500Q12 3 2 4.500Z" fill="#f9ac76" />
            <path d="M11.500 9C10.500 6 5 6 5.300 9.300C5.500 11.300 7 12 8.500 12.200C6 12.500 4.300 13.500 4.800 15.500C5.500 18.500 9.500 17.800 11 15.500C13 18 18 18 19 15.300C19.500 13.500 18 12.300 16 12.100C18 11.500 19 10.500 18.700 8.800C18 6.500 14.500 6.500 13.300 8.500L11.500 13" stroke="#fff" strokeWidth="2.500" />
          </Ic>
        </Cell>
        <Cell>
          <Ic w={18} h={24}>
            <rect width="18" height="24" fill="#fff" />
            <path d="M2 2H16V6H2ZM2 9H5V11H3V12H2ZM7 9H10V11H8V12H7ZM12 9H15V11H13V12H12ZM2 14H5V16H3V17H2ZM7 14H10V16H8V17H7ZM12 14H15V16H13V17H12ZM2 19H5V21H3V22H2ZM7 19H10V21H8V22H7ZM12 19H15V21H13V22H12Z" fill="#26090c" />
          </Ic>
        </Cell>
        <Cell>
          <Ic w={22} h={22}>
            <path d="M12 3H21.500V19H12Z" fill="#fff" stroke="#1e7145" />
            <path d="M13.500 5.500H20.500M13.500 8H20.500M13.500 10.500H20.500M13.500 13H20.500M13.500 15.500H20.500" stroke="#1e7145" strokeWidth="1.300" />
            <path d="M17 4V18" stroke="#fff" />
            <path d="M0 2L13 0V22L0 20Z" fill="#1e7145" />
            <path d="M3.800 7L9 15M9 7L3.800 15" stroke="#fff" strokeWidth="1.800" />
          </Ic>
        </Cell>
        <Cell line>
          <Ic w={23} h={23}>
            <path d="M1 22L2.600 16.500A10.800 10.800 0 1 1 6.600 20.500Z" fill="#fff" />
            <path d="M2.900 20L4 16.300A9 9 0 1 1 7 18.900Z" fill="#29c04b" />
            <path d="M7.500 6.500C6 8 6.500 10 9 12.800C11.500 15.500 14.500 17 16.300 15.500C17.500 14.500 17 13.800 17 13.500L14.500 12.300L13.300 13.500C11.500 13 10 11.500 9.300 9.900L10.200 8.700L9.200 6.300Z" fill="#fff" />
          </Ic>
        </Cell>
        <Cell line active>
          <Ic w={23} h={22}>
            <path d="M12 3H21.500V19H12Z" fill="#fff" stroke="#2b579a" />
            <path d="M13.500 5.500H20.500M13.500 7.500H20.500M13.500 9.500H20.500M13.500 11.500H20.500M13.500 13.500H20.500M13.500 15.500H20.500" stroke="#2b579a" />
            <path d="M0 2L13 0V22L0 20Z" fill="#2b579a" />
            <path d="M2.500 7.500L4.300 14.500L6.500 8L8.700 14.500L10.500 7.500" stroke="#fff" strokeWidth="1.500" />
          </Ic>
        </Cell>
      </div>
      <Ic w={15} h={16} c="ml-[117px] -mt-px">
        <circle cx="10" cy="3.500" r="2.700" stroke="#fff" strokeWidth="1.300" />
        <circle cx="5" cy="8" r="2.500" stroke="#fff" strokeWidth="1.300" />
        <path d="M1 15C1 12 3 10.700 5 10.700S8.500 12 8.500 13.500M8.500 8C11 5.800 14 7.500 14.300 10.500" stroke="#fff" strokeWidth="1.300" />
      </Ic>
      <Ic w={13} h={7} c="ml-[22px]"><path d="M0.700 6.300L6.500 0.700L12.300 6.300" stroke="#fff" strokeWidth="1.300" /></Ic>
      <Ic w={17} h={14} c="ml-[9px]">
        <path d="M3 10A3 3 0 0 1 3 5C4 1.500 10 -1 12.500 4C15 4.500 15 8 13 10Z" fill="#8a8a8a" />
        <path d="M0.500 7C2 4.500 5 4.500 7 6.500L7.500 10.500H2.500C1 10.500 0 9 0.500 7Z" fill="#ddd" />
        <circle cx="11.800" cy="9" r="4.800" fill="#777" />
        <path d="M10.500 6.500V11.500M13.200 6.500V11.500" stroke="#fff" strokeWidth="1.200" />
      </Ic>
      <Ic w={14} h={13} c="ml-[9px] mt-[2px]">
        <path d="M1 12C1 6 5.500 1 12.500 1M4 12C4 8 7.500 4 12.500 4M7 12.500C7 9.500 9.500 7 12.500 7" stroke="#bbb" strokeWidth="1.300" />
        <path d="M9.500 12.500C9.500 11 11 9.500 12.500 9.500V12.500Z" fill="#fff" />
      </Ic>
      <Ic w={15} h={9} c="ml-[9px]">
        <path d="M0.600 0.600H12.400V8.400H0.600ZM12.500 3H14.300V6H12.500" stroke="#fff" strokeWidth="1.200" />
        <path d="M2 2H8.500V7H2Z" fill="#fff" />
      </Ic>
      <Ic w={17} h={14} c="ml-[8px]">
        <path d="M0.600 4.500H3L6.500 1.200V12.800L3 9.500H0.600ZM8.500 4.500Q10 7 8.500 9.500M11 3Q13.500 7 11 11M13.500 1Q17.500 7 13.500 13" stroke="#fff" strokeWidth="1.100" />
      </Ic>
      <div className="-mt-[3px] ml-[6px] flex w-[58px] flex-col items-center text-[11.500px] leading-[18px]">
        <T w={43}>2:13 PM</T>
        <T w={58}>12/15/2020</T>
      </div>
      <div className="relative ml-[15px] h-[26px] w-[25px]">
        <Ic w={16} h={16} c="mt-[5px]">
          <path d="M0 0H16V12H7L3.500 15.500V12H0Z" fill="#fff" />
          <path d="M3 3.500H13M3 6.500H13M3 9.500H10" stroke="#111" />
        </Ic>
        <div className="absolute top-[11px] left-[7px] flex h-[17px] w-[17px] items-center justify-center rounded-full border border-[#888] bg-[#2b2b2b] text-[11px] font-semibold">5</div>
      </div>
      <div className="ml-[10px] h-full w-px bg-[#555]" />
    </div>
  );
}

export default function App() {
  return (
    <div className="flex h-[768px] w-[1366px] flex-col overflow-hidden bg-[#e6e6e6] font-['Noto_Sans','Open_Sans',sans-serif] leading-[16px]">
      <div className="relative h-[57px] shrink-0 bg-[#2b579a]">
        <Pattern />
        <TitleBar />
        <Tabs />
      </div>
      <div className="flex h-[93px] shrink-0 border-b border-[#d2d2d2] bg-[#f1f1f1]">
        <Clipboard />
        <GroupSep />
        <FontGroup />
        <GroupSep />
        <Paragraph />
        <GroupSep />
        <StylesGroup />
        <GroupSep />
        <Editing />
        <GroupSep />
        <Ic w={9} h={6} c="mt-[81px] ml-[16px]"><path d="M1 5L4.500 1.500L8 5" stroke="#666" strokeWidth="1.800" /></Ic>
      </div>
      <Doc />
      <Status />
      <Taskbar />
    </div>
  );
}
